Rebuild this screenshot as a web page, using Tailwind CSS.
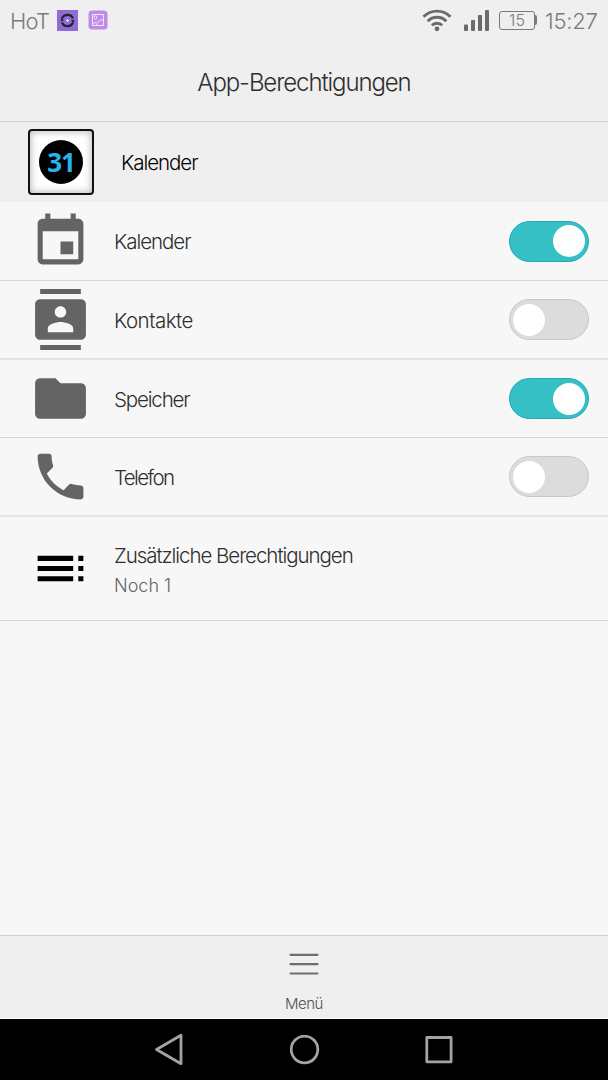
<!DOCTYPE html>
<html lang="de">
<head>
  <meta charset="UTF-8" />
  <meta name="viewport" content="width=device-width, initial-scale=1" />
  <title>App-Berechtigungen</title>
  <script src="https://cdn.jsdelivr.net/npm/@tailwindcss/browser@4"></script>
</head>
<body class="bg-[#f7f7f7] font-['Inter','Liberation_Sans',sans-serif] font-light text-[#2e2e2e]">
<div class="flex flex-col w-[608px] h-[1080px] overflow-hidden">

  <!-- Statusleiste -->
  <div class="flex items-center h-10 shrink-0 pl-[10px] pr-[10px] bg-[#efefef] text-[#7a7a7a] text-[22px]">
    <span class="w-[47px] tracking-[-0.8px] leading-10 pt-0.5">HoT</span>
    <svg class="w-[21px] h-[21px]" viewBox="0 0 21 21" fill="none">
      <rect width="21" height="21" fill="#8f6bd6" />
      <path d="M5 8.500A5.800 5.200 0 0 1 16 8.500M16 12.500A5.800 5.200 0 0 1 5 12.500" stroke="#26232e" stroke-width="2.200" />
      <path d="M3.500 11.500l1-3.500 2.500 2.500zM17.500 9.500l-1 3.500-2.500-2.500z" fill="#26232e" />
      <path d="M10.500 9v3M9 10.500h3" stroke="#e6dcfa" stroke-width="1.200" />
    </svg>
    <svg class="ml-[10px] w-[20px] h-[20px]" viewBox="0 0 20 20" fill="none">
      <rect x=".5" y=".5" width="19" height="19" rx="3.500" fill="#bf8be8" />
      <path d="M4.500 4.500h11v11h-11zM4.500 14.500l4-3M8.500 15.500c.5-3.500 3-5.500 7-6" stroke="#f1e4fc" />
      <ellipse cx="7.500" cy="7.500" rx="1.200" ry="1.900" stroke="#f1e4fc" />
    </svg>
    <div class="ml-auto flex items-center">
      <svg class="w-[30px] h-[24px]" viewBox="0 0 30 24" fill="none" stroke="#6a6a6a" stroke-width="2.900">
        <path d="M1.500 8.800a19 19 0 0 1 27 0M5.700 13.200a13 13 0 0 1 18.600 0M9.800 17.300a7.500 7.500 0 0 1 10.400 0" />
        <circle cx="15" cy="20.800" r="2.400" fill="#6a6a6a" stroke="none" />
      </svg>
      <svg class="ml-[12px] w-[26px] h-[22px]" viewBox="0 0 26 22" fill="#6a6a6a">
        <rect x="0" y="15.500" width="4" height="6.500" rx="1" />
        <rect x="7" y="11" width="4" height="11" rx="1" />
        <rect x="14" y="6" width="4" height="16" rx="1" />
        <rect x="21" y="1" width="4" height="21" rx="1" />
      </svg>
      <div class="ml-[9px] flex items-center">
        <span class="flex items-center justify-center w-[36px] h-[19px] border-[1.500px] border-[#7a7a7a] rounded-[3px] text-[16px] leading-none">15</span>
        <span class="w-[2px] h-[10px] bg-[#7a7a7a] rounded-r"></span>
      </div>
      <span class="ml-[8px] w-[53px] whitespace-nowrap tracking-[-0.2px] leading-10 pt-0.5">15:27</span>
    </div>
  </div>

  <!-- Titel -->
  <header class="flex items-center justify-center h-[82px] shrink-0 bg-[#efefef] border-b border-[#cfcfcf]">
    <h1 class="text-[24px] leading-8 tracking-[-1.100px] pt-1">App-Berechtigungen</h1>
  </header>

  <!-- App -->
  <div class="flex items-center h-[80px] shrink-0 pl-[28px] bg-[#efefef]">
    <div class="flex items-center justify-center w-[66px] h-[66px] bg-white border-2 border-[#111] rounded-[4px] shadow-[inset_0_0_7px_1px_#bbb]">
      <div class="flex items-center justify-center w-[44px] h-[44px] rounded-full bg-black">
        <span class="font-['Open_Sans','Noto_Sans',sans-serif] font-bold text-[26px] leading-none tracking-[-1.200px] text-[#29b1ec]">31</span>
      </div>
    </div>
    <span class="ml-[27px] pt-0.5 text-[20.500px] tracking-[-1.050px] text-black">Kalender</span>
  </div>

  <!-- Berechtigungen -->
  <ul class="flex flex-col shrink-0 text-[20.500px]">
    <li class="flex items-center h-[79px] pl-[30px] pr-[19px] border-b border-[#d6d6d6]">
      <svg class="w-[61px] h-[61px]" viewBox="0 0 24 24" fill="#646464"><path d="M17 12h-5v5h5v-5zM16 1v2H8V1H6v2H5c-1.110 0-1.990.9-1.990 2L3 19c0 1.100.89 2 2 2h14c1.100 0 2-.9 2-2V5c0-1.100-.9-2-2-2h-1V1h-2zm3 18H5V8h14v11z" /></svg>
      <span class="ml-[23px] pt-[3px] tracking-[-1.050px]">Kalender</span>
      <span class="ml-auto flex items-center justify-end w-[80px] h-[41px] px-[3px] rounded-full bg-[#35c0c6] border border-[#2aa9b0]"><span class="w-[32px] h-[32px] rounded-full bg-white"></span></span>
    </li>
    <li class="flex items-center h-[79px] pl-[30px] pr-[19px] border-b-2 border-[#e3e3e3]">
      <svg class="w-[61px] h-[61px]" viewBox="0 0 24 24" fill="#646464"><path d="M20 0H4v2h16V0zM4 24h16v-2H4v2zM20 4H4c-1.100 0-2 .9-2 2v12c0 1.100.9 2 2 2h16c1.100 0 2-.9 2-2V6c0-1.100-.9-2-2-2zm-8 2.750c1.240 0 2.250 1.010 2.250 2.250s-1.010 2.250-2.250 2.250S9.750 10.240 9.750 9 10.760 6.750 12 6.750zM17 17H7v-1.500c0-1.670 3.330-2.500 5-2.500s5 .83 5 2.500V17z" /></svg>
      <span class="ml-[23px] pt-[3px] tracking-[-0.5px]">Kontakte</span>
      <span class="ml-auto flex items-center w-[80px] h-[41px] px-[3px] rounded-full bg-[#dcdcdc] border border-[#c8c8c8]"><span class="w-[32px] h-[32px] rounded-full bg-white"></span></span>
    </li>
    <li class="flex items-center h-[78px] pl-[30px] pr-[19px] border-b border-[#d6d6d6]">
      <svg class="w-[61px] h-[61px]" viewBox="0 0 24 24" fill="#646464"><path d="M10 4H4c-1.100 0-1.990.9-1.990 2L2 18c0 1.100.9 2 2 2h16c1.100 0 2-.9 2-2V8c0-1.100-.9-2-2-2h-8l-2-2z" /></svg>
      <span class="ml-[23px] pt-[3px] tracking-[-1.150px]">Speicher</span>
      <span class="ml-auto flex items-center justify-end w-[80px] h-[41px] px-[3px] rounded-full bg-[#35c0c6] border border-[#2aa9b0]"><span class="w-[32px] h-[32px] rounded-full bg-white"></span></span>
    </li>
    <li class="flex items-center h-[79px] pl-[30px] pr-[19px] border-b-2 border-[#e3e3e3]">
      <svg class="w-[61px] h-[61px]" viewBox="0 0 24 24" fill="#646464"><path d="M6.620 10.790c1.440 2.830 3.760 5.140 6.590 6.590l2.200-2.200c.27-.27.67-.36 1.020-.24 1.120.37 2.330.57 3.570.57.55 0 1 .45 1 1V20c0 .55-.45 1-1 1-9.390 0-17-7.610-17-17 0-.55.45-1 1-1h3.500c.55 0 1 .45 1 1 0 1.250.2 2.450.57 3.570.11.35.03.74-.25 1.020l-2.200 2.200z" /></svg>
      <span class="ml-[23px] pt-[3px] tracking-[-1.600px]">Telefon</span>
      <span class="ml-auto flex items-center w-[80px] h-[41px] px-[3px] rounded-full bg-[#dcdcdc] border border-[#c8c8c8]"><span class="w-[32px] h-[32px] rounded-full bg-white"></span></span>
    </li>
    <li class="flex items-center h-[104px] pl-[30px] border-b border-[#d6d6d6]">
      <svg class="w-[61px] h-[61px]" viewBox="0 0 24 24" fill="#000"><path d="M3 9h14V7H3v2zm0 4h14v-2H3v2zm0 4h14v-2H3v2zm16 0h2v-2h-2v2zm0-10v2h2V7h-2zm0 6h2v-2h-2v2z" /></svg>
      <div class="ml-[23px] flex flex-col gap-0.5 pt-[5px]">
        <span class="leading-7 tracking-[-1.050px]">Zusätzliche Berechtigungen</span>
        <span class="text-[18px] leading-7 text-[#666]">Noch 1</span>
      </div>
    </li>
  </ul>

  <!-- Menü -->
  <div class="mt-auto flex flex-col items-center h-[84px] shrink-0 pt-[17px] bg-[#efefef] border-t border-t-[#cfcfcf] border-b border-b-white">
    <svg class="w-[30px] h-[23px]" viewBox="0 0 30 23" stroke="#6e6e6e" stroke-width="2.200" stroke-linecap="round"><path d="M1.500 1.800h27M1.500 11.200h27M1.500 20.500h27" /></svg>
    <span class="mt-[18px] text-[15px] leading-5 tracking-[-0.5px] text-[#505050]">Menü</span>
  </div>

  <!-- Navigationsleiste -->
  <nav class="flex items-center justify-between h-[61px] shrink-0 pl-[154px] pr-[155px] bg-black">
    <svg class="w-[30px] h-[34px]" viewBox="0 0 30 34" fill="none" stroke="#a3a3a3" stroke-width="2.800" stroke-linejoin="round"><path d="M2.500 16.500L27 2.300v28.400z" /></svg>
    <svg class="w-[30px] h-[30px]" viewBox="0 0 30 30" fill="none" stroke="#a3a3a3" stroke-width="2.800"><circle cx="14.500" cy="14.500" r="13.300" /></svg>
    <svg class="w-[28px] h-[28px]" viewBox="0 0 28 28" fill="none" stroke="#a3a3a3" stroke-width="2.800" stroke-linejoin="round"><rect x="1.800" y="1.500" width="24.300" height="24.300" /></svg>
  </nav>
</div>
</body>
</html>
